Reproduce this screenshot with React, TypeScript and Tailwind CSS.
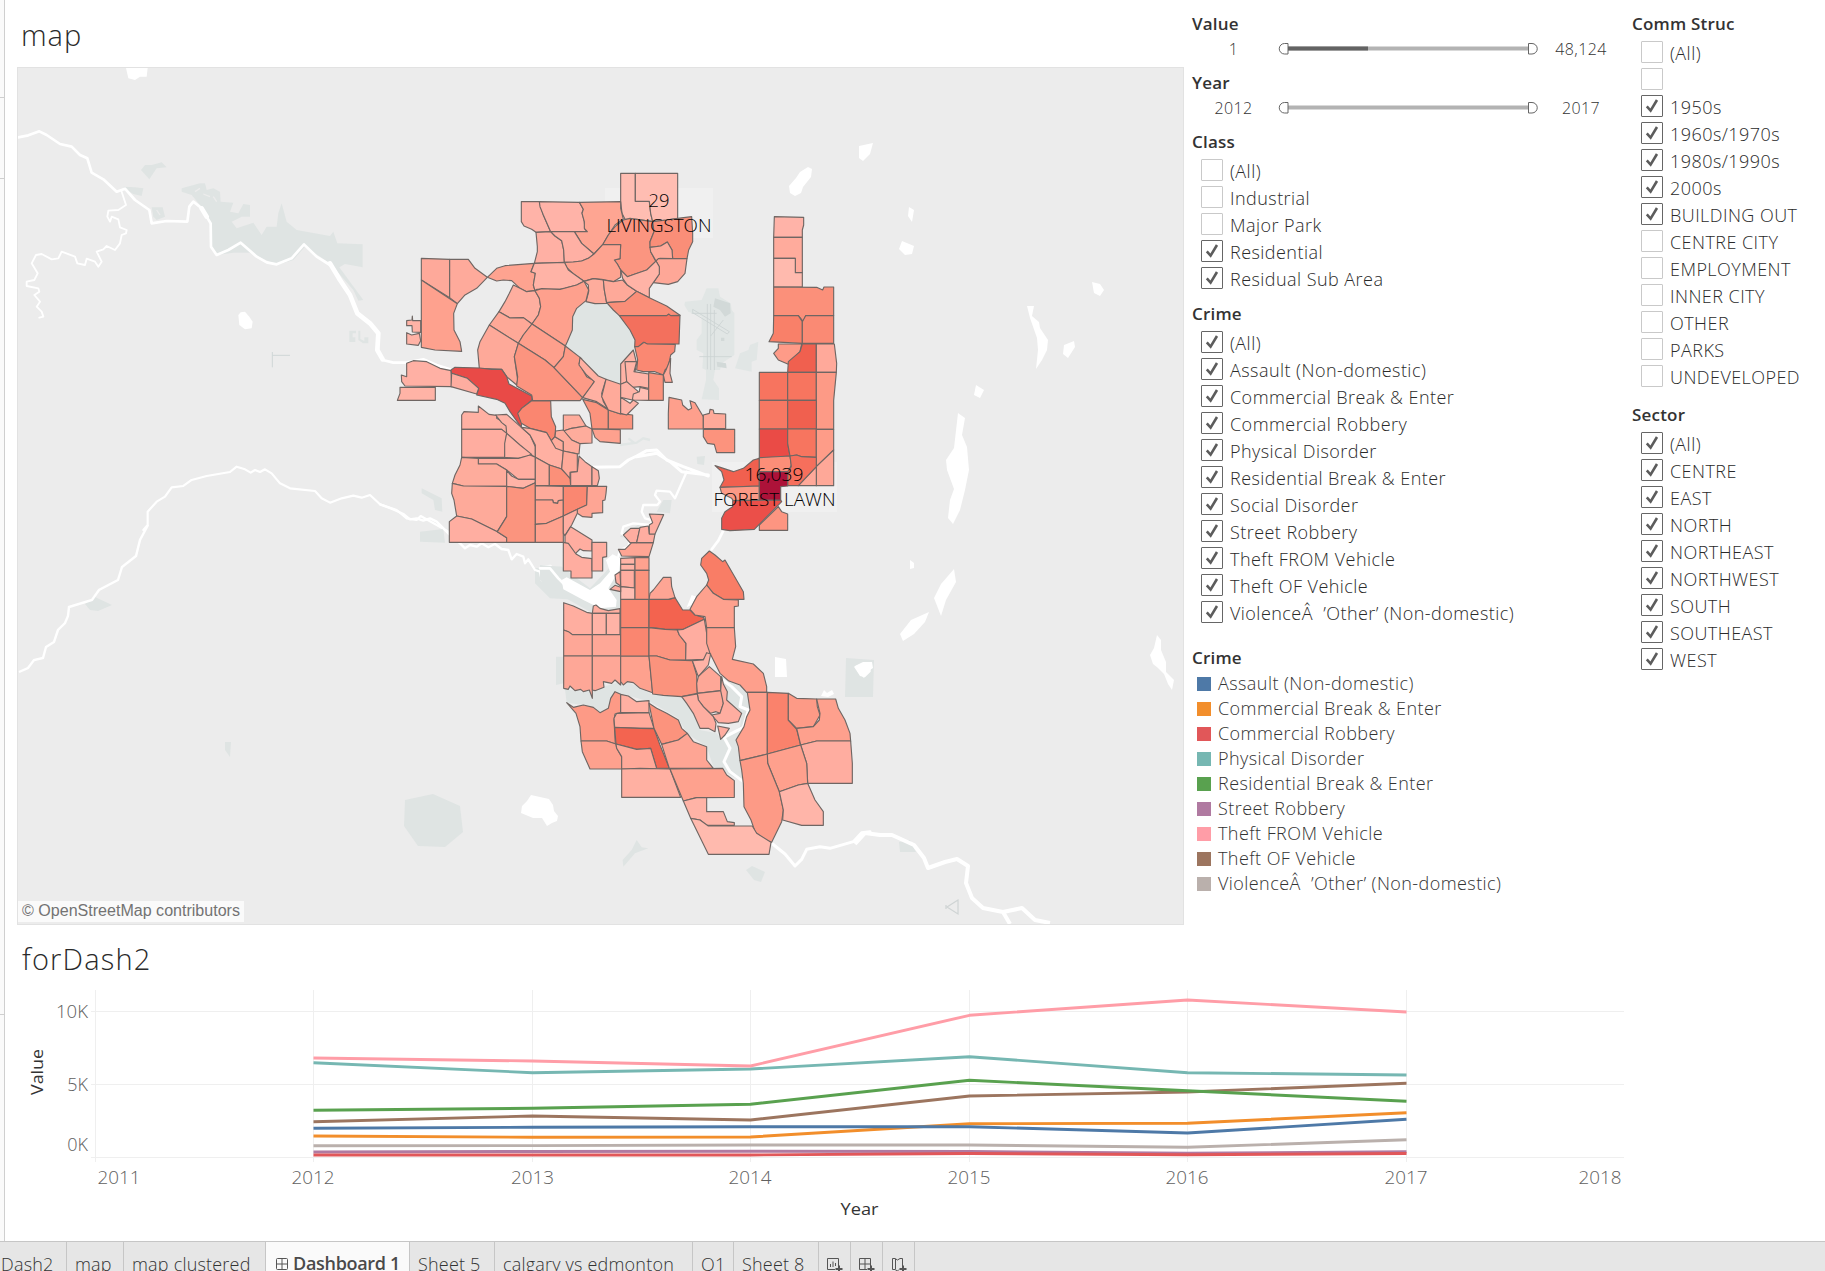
import React from "react";

type Region = [string, string];

const CLASS_ITEMS: [string, boolean][] = [
  ["(All)", false],
  ["Industrial", false],
  ["Major Park", false],
  ["Residential", true],
  ["Residual Sub Area", true],
];

const CRIME_ITEMS: [string, boolean][] = [
  ["(All)", true],
  ["Assault (Non-domestic)", true],
  ["Commercial Break & Enter", true],
  ["Commercial Robbery", true],
  ["Physical Disorder", true],
  ["Residential Break & Enter", true],
  ["Social Disorder", true],
  ["Street Robbery", true],
  ["Theft FROM Vehicle", true],
  ["Theft OF Vehicle", true],
  ["ViolenceÂ\u00a0 ’Other’ (Non-domestic)", true],
];

const STRUCTURE_ITEMS: [string, boolean][] = [
  ["(All)", false],
  ["", false],
  ["1950s", true],
  ["1960s/1970s", true],
  ["1980s/1990s", true],
  ["2000s", true],
  ["BUILDING OUT", true],
  ["CENTRE CITY", false],
  ["EMPLOYMENT", false],
  ["INNER CITY", false],
  ["OTHER", false],
  ["PARKS", false],
  ["UNDEVELOPED", false],
];

const SECTOR_ITEMS: [string, boolean][] = [
  ["(All)", true],
  ["CENTRE", true],
  ["EAST", true],
  ["NORTH", true],
  ["NORTHEAST", true],
  ["NORTHWEST", true],
  ["SOUTH", true],
  ["SOUTHEAST", true],
  ["WEST", true],
];

const LEGEND: [string, string][] = [
  ["Assault (Non-domestic)", "bg-[#4e79a7]"],
  ["Commercial Break & Enter", "bg-[#f28e2b]"],
  ["Commercial Robbery", "bg-[#e15759]"],
  ["Physical Disorder", "bg-[#76b7b2]"],
  ["Residential Break & Enter", "bg-[#59a14f]"],
  ["Street Robbery", "bg-[#b07aa1]"],
  ["Theft FROM Vehicle", "bg-[#ff9da7]"],
  ["Theft OF Vehicle", "bg-[#9c755f]"],
  ["ViolenceÂ\u00a0 ’Other’ (Non-domestic)", "bg-[#bab0ac]"],
];

const NORTH: Region[] = [
  ["#ffbdb2", "722,70 766,70 766,154 808,154 812,190 818,215 770,208 735,208 726,190 722,155"],
  ["#ffbdb2", "766,70 893,70 893,205 860,210 818,215 812,190 808,154 766,154"],
  ["#ffb3a8", "424,155 478,155 490,195 512,245 468,247 455,238 432,228 424,215"],
  ["#ffb3a8", "478,155 598,157 610,178 606,188 613,215 615,238 622,245 512,245 490,195 480,170"],
  ["#fea592", "598,157 722,155 722,175 730,207 705,225 685,255 668,284 642,312 605,280 583,245 622,245 613,235 613,215 606,190 610,178"],
  ["#ffb0a4", "468,247 512,245 525,258 545,272 551,300 553,337 463,340 472,305 472,290"],
  ["#ffb0a4", "512,245 583,245 605,280 642,312 625,325 605,333 580,336 553,337 551,300 545,272 525,258"],
  ["#fb9580", "730,210 750,205 770,208 818,215 822,245 810,275 812,305 828,335 820,348 800,360 765,372 742,380 722,360 712,342 703,330 720,326 722,284 668,284 685,255 705,230"],
  ["#fa8e78", "893,205 935,200 938,250 938,275 926,300 921,326 878,326 876,300 862,276 842,288 810,292 810,275 822,245 818,215 860,210"],
  ["#ffaa9a", "810,292 842,288 862,276 876,300 878,326 840,325 828,333 812,305"],
  ["#fea797", "835,326 921,326 915,370 893,395 865,403 820,398 838,372 838,350 828,333"],
  ["#fea390", "642,312 668,284 722,284 720,326 703,330 712,342 722,360 722,382 700,395 665,388 640,386 612,394 580,372 560,352 553,337 580,336 605,333 625,325"],
  ["#fea390", "322,382 350,355 375,347 463,340 453,365 466,370 460,405 465,422 440,425 420,415 395,392 370,390 350,393"],
  ["#ffb3a6", "463,340 553,337 565,360 590,378 612,394 590,405 555,415 540,418 470,418 465,422 460,405 466,370 453,365"],
  ["#feac9c", "612,394 640,386 670,390 673,420 680,460 645,461 618,455 626,425 625,405"],
  ["#fea999", "670,390 700,395 728,390 742,405 770,424 735,454 680,458 673,420"],
  ["#ffb3a6", "722,360 742,380 765,372 800,360 828,333 838,350 838,372 820,398 808,415 808,443 770,424 742,405 728,385"],
  ["#fa8e78", "680,458 735,454 770,424 808,443 860,468 900,496 718,497 700,480"],
  ["#f3705d", "718,497 860,497 866,492 872,497 900,496 897,582 802,582 790,577 775,590 764,590 765,570 750,540"],
  ["#fa8872", "764,590 775,590 792,577 802,582 886,583 884,605 872,615 865,650 855,660 850,675 825,665 790,665 770,660 773,630"],
  ["#fea99a", "124,325 209,328 209,443 124,390"],
  ["#feaa9b", "209,328 265,328 285,355 322,382 290,415 255,435 232,461 209,443"],
  ["#fea18e", "124,390 232,461 221,490 222,540 240,575 245,604 165,600 124,592"],
  ["#ffb3a6", "80,512 96,510 97,498 98,512 122,512 122,547 97,546 96,527 80,527"],
  ["#ffb3a6", "80,548 95,555 118,550 122,572 115,586 80,582"],
  ["#feae9f", "400,405 420,415 440,425 465,422 478,445 482,470 475,495 456,522 430,503 390,504 357,485 375,455 388,430"],
  ["#fea08d", "465,422 485,416 540,418 590,405 612,394 626,420 618,452 590,475 578,500 577,540 562,575 556,588 456,522 475,495 482,470 478,445"],
  ["#fea897", "357,485 390,504 430,503 456,522 430,555 415,580 328,525"],
  ["#fea999", "328,525 415,580 403,620 413,690 410,705 380,680 365,658 298,655 293,600 300,575"],
  ["#fe9f8c", "456,522 556,588 550,620 522,653 495,630 415,580 430,555"],
  ["#fc947f", "415,580 495,630 522,653 608,743 600,752 458,752 455,735 410,708 413,680 403,620"],
  ["#fd9a86", "556,588 605,626 597,640 605,655 620,680 643,692 635,710 608,743 522,653 550,620"],
];

const WEST: Region[] = [
  ["#ffb0a4", "80,40 100,32 140,35 180,55 213,62 215,110 75,108 65,95 64,75 80,80"],
  ["#ffb3a6", "60,112 166,112 166,151 52,151 60,130"],
  ["#e94a47", "213,60 225,52 300,54 335,58 365,58 380,80 387,102 455,138 456,150 425,175 415,190 425,215 424,232 390,185 375,160 350,148 290,135 296,115 262,85 215,70"],
  ["#feada0", "215,70 262,85 296,115 290,132 213,110"],
  ["#fa8670", "425,175 456,152 512,153 514,200 527,230 525,260 514,272 500,248 450,235 424,220 413,190"],
  ["#ffb0a2", "245,195 252,185 295,187 295,168 327,193 350,196 350,205 363,212 380,228 380,250 365,238 245,238"],
  ["#ffada0", "245,238 365,238 380,250 374,322 245,322"],
  ["#ffb3a6", "347,195 380,193 424,232 450,255 466,290 466,322 450,313 380,250 378,228 365,218"],
  ["#ffb3a6", "380,250 420,285 455,313 440,320 415,325 374,322 374,280"],
  ["#ffb0a2", "424,232 450,235 500,248 514,272 527,290 550,303 545,357 508,345 466,322 466,285 450,255"],
  ["#ffada0", "295,325 415,325 450,315 466,322 466,388 415,388 380,360 350,342 295,342"],
  ["#feac9c", "245,322 295,325 295,342 350,342 380,360 380,409 250,408 217,400 225,375 240,345"],
  ["#ffb3a6", "380,362 395,378 415,388 466,388 466,398 430,415 380,409"],
  ["#feaa9a", "217,400 250,408 380,409 380,500 352,545 275,507 230,498 222,450 215,430"],
  ["#ffaea1", "208,515 230,498 275,507 352,545 380,563 380,577 208,577"],
  ["#fb947e", "380,409 430,415 466,398 466,577 380,577 380,563 352,545 380,500"],
  ["#feaa9a", "466,322 508,345 508,407 466,407"],
  ["#fb9079", "508,345 545,357 570,383 572,407 508,407"],
  ["#feaa9a", "466,407 550,409 550,450 535,452 533,460 520,458 518,450 466,450"],
  ["#fea18e", "466,450 518,450 520,458 533,460 535,452 550,450 550,498 500,520 466,523"],
  ["#fea18e", "466,523 500,520 550,498 550,577 466,577"],
  ["#fa8771", "550,409 622,409 620,465 550,498"],
  ["#fea594", "622,409 680,409 678,430 675,450 668,452 668,488 636,490 636,502 608,500 592,490 592,478 620,465"],
  ["#ffada0", "550,498 592,478 592,490 575,525 555,557 550,550"],
  ["#ffada0", "555,557 572,530 636,570 636,603 610,602 600,597 587,610 590,618 555,577"],
  ["#ffada0", "550,577 565,580 588,612 605,622 636,626 636,684 573,684 573,663 550,663"],
  ["#ffaea1", "636,577 680,577 680,620 668,622 668,663 636,663"],
  ["#feac9c", "550,195 598,195 618,228 575,235 550,243"],
  ["#feac9c", "550,243 575,235 618,228 636,237 636,279 600,281 575,270"],
  ["#feac9c", "514,272 525,260 550,275 550,303 527,295"],
  ["#feac9c", "527,243 550,240 575,270 600,281 597,312 550,303 550,275 525,260"],
  ["#fea999", "550,303 592,312 592,365 570,367 570,385 545,357"],
  ["#feada0", "597,318 615,335 636,350 636,407 572,407 572,367 592,365"],
  ["#feada0", "636,350 655,362 658,385 652,407 636,407"],
  ["#fb937d", "608,148 650,158 685,180 685,237 636,237 630,190"],
  ["#fb937d", "685,180 715,190 758,195 758,237 685,237"],
  ["#fea18e", "636,237 721,239 721,280 660,275 645,262"],
  ["#ffb0a2", "600,22 655,78 678,88 665,130 670,155 685,178 650,155 608,143 643,95 620,75 597,45"],
  ["#ffaa9a", "678,88 722,103 722,192 685,180 665,140"],
  ["#ffb3a6", "722,42 760,0 770,40 765,65 740,95 722,103"],
  ["#ffb3a6", "735,35 770,35 762,65 806,72 806,115 780,110 757,112 740,95"],
  ["#ffb3a6", "722,103 740,95 760,112 775,125 757,150 722,142"],
  ["#ffbdb2", "757,150 760,132 778,125 780,112 806,118 806,151"],
  ["#ffb3a6", "722,142 750,160 760,150 775,160 740,195 722,190"],
  ["#fc937d", "806,68 850,75 850,151 806,151"],
  ["#ffa797", "850,75 858,60 872,25 870,70 877,97 855,97"],
  ["#fe9f8c", "867,142 905,150 908,165 925,180 935,175 930,152 945,158 970,200 970,237 865,237 865,190"],
];

const EAST: Region[] = [
  ["#fea999", "250,795 268,790 270,778 280,780 282,790 317,792 317,836 250,836"],
  ["#fc937d", "250,838 344,838 344,908 290,908 283,883 262,880 250,860"],
  ["#ffb3a8", "463,200 551,202 551,225 547,240 547,262 461,262"],
  ["#ffab9c", "461,262 547,262 547,368 526,368 526,325 461,325"],
  ["#ffbaae", "461,325 526,325 526,368 547,368 547,411 461,411"],
  ["#fb907a", "461,411 590,412 608,420 612,411 641,411 641,497 557,497 550,515 535,497 461,497"],
  ["#f98069", "461,497 535,497 547,515 547,580 447,575 460,550"],
  ["#fa8a74", "547,515 557,497 641,497 641,580 547,580"],
  ["#fe9b88", "475,582 545,582 540,605 505,643 475,630 461,610 475,595"],
  ["#f0604f", "547,582 589,582 589,667 503,667 505,635 540,605"],
  ["#ffa99a", "589,582 643,582 650,640 649,667 589,667"],
  ["#f7745f", "418,667 503,667 503,751 418,751"],
  ["#f7755f", "503,667 589,667 589,751 503,751"],
  ["#fd9a86", "589,667 649,667 641,751 641,838 589,838"],
  ["#f77863", "418,751 503,751 503,837 418,837"],
  ["#f0604f", "503,751 589,751 589,837 503,837"],
  ["#ea4b46", "418,837 503,837 503,880 510,918 418,925"],
  ["#f7755f", "503,837 589,837 589,922 545,920 530,915 510,918 503,880"],
  ["#fe9c88", "589,838 641,838 641,900 589,950"],
  ["#fea898", "589,950 641,900 641,1007 589,1007"],
  ["#ffa99a", "535,1007 589,950 589,1007"],
  ["#f1604f", "285,947 340,965 370,955 400,930 418,925 418,1008 300,1012 312,990 305,965"],
  ["#fc8e78", "418,923 510,918 514,945 505,965 418,965"],
  ["#f66f5c", "514,950 510,918 530,915 545,920 589,922 589,950 535,1007 503,1007 503,965"],
  ["#fc9a86", "300,1012 418,1008 418,1050 340,1052 335,1045 305,1030"],
  ["#eb4f49", "338,1052 482,1050 485,1055 403,1138 330,1142 305,1138 305,1105 315,1085 338,1070"],
  ["#ad1239", "418,965 503,965 503,1008 482,1010 482,1050 418,1050"],
  ["#fd9581", "418,1125 475,1070 485,1085 503,1092 503,1141 418,1141"],
];

const SOUTH: Region[] = [
  ["#ffaea0", "71,308 100,318 140,337 157,340 157,404 97,404 85,395 71,390"],
  ["#ffaea0", "157,340 160,318 168,315 180,325 205,332 240,326 240,340"],
  ["#ffb3a6", "157,340 199,340 199,404 157,404"],
  ["#ffb3a6", "199,340 240,340 240,404 199,404"],
  ["#fea797", "71,390 85,395 97,404 157,404 157,468 71,468"],
  ["#fea797", "157,404 242,404 242,468 157,468"],
  ["#fea797", "71,468 157,468 157,595 148,570 130,575 122,568 105,572 90,558 85,568 71,565"],
  ["#fea797", "157,468 242,468 242,555 225,540 215,550 190,545 192,562 165,572 157,570"],
  ["#fea18e", "242,468 327,468 338,578 300,565 280,548 262,545 250,555 242,545"],
  ["#fa8670", "242,298 327,298 327,383 242,383"],
  ["#fa8670", "242,383 327,383 327,468 242,468"],
  ["#f3634f", "327,298 385,298 405,293 428,330 450,330 465,345 490,352 493,358 430,388 375,388 350,384 327,383"],
  ["#fc947f", "327,383 375,388 412,390 418,405 438,430 437,480 390,480 350,468 327,468"],
  ["#ffada0", "412,390 430,388 493,358 500,400 510,460 490,478 437,480 438,430 418,405"],
  ["#fb937d", "327,468 350,468 390,480 457,482 470,525 472,580 425,590 370,586 338,582"],
  ["#fea594", "330,280 340,270 370,232 393,232 395,260 405,293 385,298 327,298"],
  ["#ffb3a6", "242,175 285,173 285,193 242,193"],
  ["#ffb3a6", "242,193 285,193 285,211 242,211"],
  ["#ffada0", "242,211 283,211 283,264 242,260"],
  ["#ffbdb2", "242,260 285,264 285,298 242,298"],
  ["#fea28f", "285,173 327,173 327,211 285,211"],
  ["#fc937d", "285,211 327,211 327,298 285,298"],
  ["#fea594", "235,148 255,148 275,128 340,128 327,170 245,168"],
  ["#feada0", "250,105 272,85 300,85 290,128 270,128"],
  ["#feada0", "300,82 325,78 328,102 345,102 340,128 290,128"],
  ["#feada0", "328,42 371,44 345,102 328,102 328,75 338,68"],
  ["#feada0", "225,225 240,215 242,258 228,248"],
  ["#feada0", "210,268 225,256 242,262 242,275"],
  ["#f97d66", "508,153 525,165 548,185 555,180 610,275 612,298 550,298 520,280 500,255 506,240 500,220 482,195 485,175"],
  ["#fea18e", "500,255 520,280 550,298 595,300 595,318 583,320 583,383 500,383 495,350 465,345 450,328 470,290"],
  ["#fe9f8c", "500,383 583,383 587,440 577,478 640,492 670,520 680,560 680,577 620,577 600,555 565,542 540,520 510,460 500,430"],
  ["#ffb3a6", "457,482 490,480 500,458 512,462 505,495 475,530"],
  ["#fea797", "475,530 485,520 508,500 542,530 542,572 472,580 470,550"],
  ["#fea797", "472,580 545,572 550,610 540,640 528,635 512,640 490,620 475,600"],
  ["#feada0", "545,530 550,552 562,575 560,600 605,640 595,665 565,670 535,668 515,645 540,640 550,610 542,572"],
  ["#feada0", "425,590 472,582 475,600 490,620 520,650 528,670 525,695 505,685 480,685 460,640 440,610"],
  ["#feada0", "533,678 568,685 555,705 542,718"],
  ["#fea08d", "622,577 682,577 682,762 600,782 595,740 588,720 612,680 620,650 630,630"],
  ["#fa826c", "682,577 745,580 745,660 770,688 782,735 682,762"],
  ["#fd9a86", "745,580 770,595 830,597 832,620 840,645 820,680 770,685 745,660"],
  ["#fea08d", "830,597 887,597 895,625 915,660 930,700 932,723 830,723 782,735 770,685 820,680 838,660 840,640"],
  ["#ffada0", "782,735 830,723 932,723 937,790 937,850 803,850 800,790"],
  ["#fea08d", "682,762 782,735 800,790 803,850 775,855 718,875 683,790"],
  ["#fd9a86", "600,782 682,762 683,790 718,875 730,930 725,965 695,1027 675,1020 645,995 633,960 612,920 610,850 605,810"],
  ["#ffb5a9", "718,875 775,855 803,850 825,900 850,935 850,976 785,976 728,960 730,930"],
  ["#fd9a86", "80,608 100,622 130,615 160,622 180,638 205,625 212,595 225,575 242,583 242,638 225,642 222,660 226,732 200,723 123,723 120,680 108,640"],
  ["#fea18e", "123,723 200,723 228,732 230,745 245,770 245,807 150,807 127,755"],
  ["#ffb0a2", "242,583 265,588 290,605 327,602 327,638 242,638"],
  ["#ffaa9b", "222,655 230,640 327,638 342,685 300,685 224,682"],
  ["#f36450", "224,682 300,685 342,686 360,735 388,805 350,805 332,745 290,748 228,732"],
  ["#ffa999", "228,732 290,748 332,745 350,805 245,807 245,770 230,745"],
  ["#fc937d", "327,610 350,625 380,640 415,660 425,685 442,700 415,720 365,733 342,685"],
  ["#fea594", "365,733 415,720 442,700 460,725 500,740 500,780 520,805 388,805"],
  ["#ffb0a2", "245,807 300,805 390,807 422,892 245,892"],
  ["#fea18e", "390,807 548,805 560,825 583,842 583,892 470,893 430,903"],
  ["#ffb3a6", "430,903 470,893 500,893 500,935 550,935 562,965 583,968 583,976 500,976 480,960 452,955"],
  ["#ffbaae", "452,955 480,960 505,978 637,978 650,1000 693,1027 687,1063 505,1063"],
];

const LAKES = [
  "789,186 796,178 800,172 808,167 812,169 811,177 803,187 801,193 795,196 790,193",
  "859,146 873,143 870,154 863,161 859,158",
  "909,207 914,210 912,222 908,216",
  "902,241 914,246 912,254 905,255 899,249",
  "1092,282 1100,284 1104,290 1100,296 1094,293",
  "1027,306 1034,306 1032,316 1039,322 1040,328 1048,340 1047,350 1042,360 1036,369 1038,350 1037,338 1030,318",
  "1064,345 1074,341 1075,347 1068,358 1063,354",
  "976,385 984,390 980,398 974,395",
  "958,413 965,418 962,435 967,447 969,470 965,490 960,510 953,524 948,518 950,500 954,489 947,470 946,460 954,448",
  "954,569 956,582 946,600 941,616 934,598 941,584",
  "929,612 925,622 914,634 903,641 900,634 911,620",
  "1157,635 1161,640 1161,650 1166,662 1166,672 1174,680 1172,690 1168,684 1164,674 1158,668 1153,664 1150,655 1154,648",
  "775,657 786,659 787,677 775,677",
  "855,666 863,662 872,662 873,668 867,672 864,678 858,672",
  "522,806 527,801 531,795 549,799 553,805 554,811 558,816 557,821 552,823 547,826 542,818 533,818 521,813",
  "910,560 914,563 914,568 910,569",
  "824,690 827,693 832,690 834,694 828,697 821,696",
];

const PARKS = [
  "405,800 433,794 460,806 463,832 445,847 418,846 404,826",
  "846,658 874,660 873,697 845,697",
  "899,842 910,840 916,852 900,852",
  "225,742 231,742 230,757 225,750",
  "85,604 95,597 112,605 98,611 90,610",
  "746,870 752,866 765,872 761,882 754,880",
];

const YEARS: [string, number][] = [
  ["2011", 119],
  ["2012", 313],
  ["2013", 532.5],
  ["2014", 750],
  ["2015", 969],
  ["2016", 1187],
  ["2017", 1406],
  ["2018", 1600],
];

const GRID_X = [95.5, 313.5, 532.5, 750.5, 969.5, 1187.5, 1406.5];
const LINE_X = [313.5, 532.5, 750.5, 969.5, 1187.5, 1406.5];

const SERIES: [string, number[]][] = [
  ["#b07aa1", [1152, 1151.5, 1151.3, 1151.5, 1153.3, 1151.7]],
  ["#bab0ac", [1145.7, 1145.6, 1145, 1145, 1147.3, 1139.7]],
  ["#e15759", [1155, 1155, 1155, 1153.5, 1154.7, 1153.5]],
  ["#f28e2b", [1136, 1137.3, 1137, 1123.7, 1123.3, 1112.7]],
  ["#4e79a7", [1128.3, 1127.3, 1126.7, 1126.7, 1133, 1119.3]],
  ["#9c755f", [1121.7, 1116, 1120, 1096, 1092, 1083.3]],
  ["#59a14f", [1110.3, 1108.3, 1104.3, 1080.3, 1090.7, 1101.3]],
  ["#76b7b2", [1062.7, 1072.7, 1069, 1056.7, 1072.7, 1075]],
  ["#ff9da7", [1058, 1061, 1066, 1015.3, 1000, 1012]],
];

function Regions({ items, transform }: { items: Region[]; transform: string }) {
  return (
    <g transform={transform} stroke="#6f6663" strokeWidth={3.4} strokeLinejoin="round">
      {items.map(([fill, points], i) => (
        <polygon key={i} fill={fill} points={points} />
      ))}
    </g>
  );
}

function MapView() {
  return (
    <svg viewBox="18 68 1165 856" className="h-[858px] w-[1167px] shrink-0 border border-[#e2e2e2] bg-[#ececec]">
      <g fill="#dfe4e3">
        {PARKS.map((p) => (
          <polygon key={p} points={p} />
        ))}
      </g>
      <g transform="translate(0 50) scale(.33333)">
        <g fill="#dfe4e3">
          <polygon points="600,465 575,435 545,425 545,415 600,400 615,400 620,420 640,415 660,425 662,455 700,458 690,485 715,490 730,462 750,465 750,500 725,500 695,515 710,535 760,518 785,555 800,530 830,530 835,490 845,460 860,515 890,540 990,558 1000,545 1012,580 1088,583 1088,652 1035,642 1018,652 1090,750 1075,752 1060,720 990,640 915,590 880,630 830,645 750,608 700,608 650,615 635,590 630,520" />
          <polygon points="423,360 435,345 455,345 485,337 500,352 470,355 448,388" />
          <polygon points="370,410 405,412 430,415 425,438 400,432 380,420" />
          <polygon points="455,472 488,472 495,500 470,510 460,500" />
          <path d="M1048 842h20v8h-10v12h8v14h-18zM1075 842h6v25l12 6v-11h12v18h-16l-14-10z" />
        </g>
        <g fill="none" stroke="#ececec" strokeWidth={4}>
          <path d="M585 425 600 415M610 432 630 440M640 440 650 455M470 480 480 495" />
        </g>
        <g fill="none" stroke="#ffffff" strokeLinejoin="round" strokeLinecap="round">
          <path strokeWidth={8} d="M54 262 85 256 118 244 140 255 180 282 215 290 240 315 262 325 275 368 310 388 350 425 375 416 405 450 448 480 455 520 500 513 562 515 568 470 580 455 605 475 632 520 633 590 650 615 685 600 722 578 770 620 800 637 830 643 875 625 912 583 950 620 990 645" />
          <path strokeWidth={14} d="M605 475 620 500M990 640 1020 690 1050 735 1072 790 1110 820 1135 850 1132 900 1148 928" />
          <path strokeWidth={8} d="M1148 930 1180 938 1220 938 1270 928 1310 945 1350 958" />
          <path strokeWidth={5.5} d="M365 425 378 465 355 480 325 482 322 500 330 515 335 500 355 508 360 532 380 540 378 550 365 555 360 580 345 600 320 588 310 598 290 605 305 635 295 650 285 635 260 626 255 645 232 640 225 620 185 605 175 625 155 628 125 612 108 615 95 640 113 670 103 690 80 695 80 708 115 715 118 725 103 735 120 755 110 770 125 785 130 800 118 803" />
          <path strokeWidth={6.5} d="M430 1440 443 1425 443 1385 470 1355 495 1340 515 1312 550 1308 575 1290 620 1278 690 1266 710 1250 735 1258 752 1268 765 1260 780 1266 795 1258 815 1270 840 1300 870 1315 945 1323 965 1345 990 1358 1025 1345 1060 1337 1085 1343 1110 1335 1140 1363 1190 1380 1220 1405 1250 1410 1262 1398 1310 1425 1345 1445" />
        </g>
        <path fill="#ffffff" d="M378 54 443 54 440 80 420 80 405 90 385 85ZM715 795 722 787 735 785 748 800 758 815 755 835 735 838 718 825Z" />
        <path stroke="#cfd6d6" strokeWidth={3} fill="none" d="M870 916H817M817 906V952" />
      </g>
      <path fill="none" stroke="#ffffff" strokeWidth={2.4} d="M148 525 140 540 136 556 122 567 118 580 99 590 92 600 69 607 68 616 65 623 58 630 54 642 46 647 43 658 34 660 28 668 19 672" />
      <g fill="#ffffff">
        {LAKES.map((p) => (
          <polygon key={p} points={p} />
        ))}
      </g>
      <g transform="translate(380 150) scale(.33333)" fill="#dfe4e3">
        <polygon points="618,455 680,460 700,480 718,497 750,540 765,570 762,600 722,640 722,703 655,678 595,622 556,588 577,540 578,500 590,475" />
      </g>
      <g transform="translate(620 150) scale(.33333)">
        <path fill="#e1e6e5" d="M260 415 295 415 300 440 332 460 335 480 343 490 343 615 305 640 300 660 285 660 280 690 297 715 297 750 245 748 258 690 258 660 247 655 250 610 230 600 230 570 245 550 245 500 205 485 193 465 195 455 245 450ZM360 610 385 600 390 585 415 575 410 630 395 635 395 665 345 655Z" />
        <path fill="#d2d9d8" d="M285 445 330 460 332 490 315 500 300 480 280 470ZM290 635 318 640 320 655 292 650ZM303 563h10v10h-10z" />
        <path stroke="#cbd3d2" strokeWidth={2.5} fill="none" d="M262 462V658M272 462V660M283 480V660M218 478 328 545 322 552 218 488ZM215 490H290M272 558 310 510M238 620H335" />
      </g>
      <g transform="translate(380 350) scale(.33333)">
        <path fill="#dfe4e3" d="M125 415 185 445 187 485 165 480 160 450 125 430ZM120 545 190 537 195 578 120 575ZM465 655 545 650 545 720 600 750 510 745 465 700ZM850 450 875 450 870 490 830 485ZM765 530 780 520 770 570 720 560 740 540ZM950 320 975 318 972 345 952 342Z" />
        <path fill="none" stroke="#e1e6e5" strokeWidth={7} d="M720 285 770 278 790 265 810 270M745 265 765 280" />
        <g fill="none" stroke="#ffffff" strokeLinejoin="round" strokeLinecap="round">
          <path strokeWidth={7} d="M0 463 40 478 70 492 90 508 110 505 130 512 150 505 170 515 185 530 200 545 215 560 240 580 255 595 270 585 290 590 305 580 325 592 345 582 365 597 385 600 395 628 410 612 430 620 435 640 445 628 465 660 480 665 485 690 492 680 485 650 512 648 525 660 525 680 545 685" />
          <path strokeWidth={9} d="M600 322 632 352 720 350 745 330 770 318 800 302 830 300 860 330 910 350 985 378M770 320 830 310 870 335 905 365 985 375" />
          <path strokeWidth={7} d="M920 365 885 445 870 425 830 422 825 435 840 455 832 465 790 465 785 485 795 505 815 510 812 525 760 520 730 530 725 550 750 570 745 590 720 600 715 620" />
        </g>
      </g>
      <g transform="translate(540 500) scale(.33333)">
        <path fill="#dfe4e3" d="M0 195 65 200 150 265 240 170 240 330 155 338 70 290 0 240ZM48 470 71 470 71 550 48 555ZM75 568 130 575 157 570 240 545 262 545 340 585 425 590 460 640 480 690 530 700 545 720 600 680 605 640 560 600 545 530 600 555 622 577 630 630 588 720 605 810 610 845 560 820 520 800 500 740 440 700 415 655 330 605 240 580 212 600 205 625 180 638 130 615 80 608ZM248 1080 275 1050 290 1020 305 1042 325 1045 285 1060 250 1100Z" />
        <path fill="#ffffff" d="M65 240 80 232 150 270 180 250 210 215 198 180 218 163 242 175 238 210 205 265 230 300 228 320 180 325 130 300 70 268ZM440 322 455 285 468 290 455 315ZM942 500 965 490 992 492 992 515 975 532 960 528Z" />
        <g fill="none" stroke="#ffffff" strokeLinejoin="round" strokeLinecap="round">
          <path strokeWidth={8} d="M0 205 30 205 55 235 75 255M550 92 535 122 515 148" />
          <path strokeWidth={9} d="M548 540 575 560 605 590 600 620 625 630 610 682 552 712 570 745 552 785 570 815 610 845" />
          <path strokeWidth={9} d="M698 1032 735 1062 765 1098 785 1078 800 1048 840 1040 870 1045 940 1025 965 998 990 995" />
        </g>
      </g>
      <path fill="none" stroke="#ffffff" strokeWidth={4} strokeLinejoin="round" d="M855 844 865 833 880 835 892 835 914 845 924 858 928 868 945 862 957 859 968 866 966 883 972 898 983 908 1003 912 1010 924M1003 912 1022 908 1035 920 1050 923" />
      <path fill="none" stroke="#cfd4d4" strokeWidth={1.2} d="M958 900 947 907 958 914ZM946 905v4" />

      <g fill="#ffffff" fillOpacity={0.22}>
        <rect x="605" y="188" width="108" height="50" />
        <rect x="712" y="462" width="125" height="50" />
      </g>

      <Regions items={NORTH} transform="translate(380 150) scale(.33333)" />
      <Regions items={SOUTH} transform="translate(540 500) scale(.33333)" />
      <Regions items={WEST} transform="translate(380 350) scale(.33333)" />
      <Regions items={EAST} transform="translate(620 150) scale(.33333)" />

      <g fill="#000000" fontSize="18" fontWeight="300" textAnchor="middle">
        <text x="659" y="206.5" textLength="21" lengthAdjust="spacingAndGlyphs">29</text>
        <text x="659" y="232" textLength="105" lengthAdjust="spacingAndGlyphs">LIVINGSTON</text>
        <text x="774" y="481" textLength="59" lengthAdjust="spacingAndGlyphs">16,039</text>
        <text x="774.5" y="506" textLength="122" lengthAdjust="spacingAndGlyphs">FOREST LAWN</text>
      </g>
      <rect x="18" y="901" width="226" height="21" fill="#ffffff" fillOpacity={0.75} />
      <text x="22" y="916" fontSize="16" fill="#737373" textLength="218" lengthAdjust="spacingAndGlyphs" className="font-['Liberation_Sans',sans-serif]">
        © OpenStreetMap contributors
      </text>
    </svg>
  );
}

function Heading({ children }: { children: React.ReactNode }) {
  return (
    <h2 className="h-[26px] text-[17px] leading-[28px] font-semibold tracking-[0.2px] whitespace-nowrap text-[#333]">
      {children}
    </h2>
  );
}

function CheckRow({ label, checked }: { label: string; checked: boolean }) {
  return (
    <li className="flex h-[27px] items-start gap-[7px]">
      <span
        className={
          checked
            ? "flex h-[22px] w-[22px] shrink-0 items-center justify-center rounded-[1px] border border-[#666] bg-white"
            : "h-[22px] w-[22px] shrink-0 rounded-[1px] border border-[#c9c9c9] bg-white"
        }
      >
        {checked && (
          <svg viewBox="0 0 14 14" className="h-[14px] w-[14px]" fill="none" stroke="#5c5c5c" strokeWidth="2.6">
            <path d="M1.800 7.400 5.600 11.600 12 1" />
          </svg>
        )}
      </span>
      <span className="text-[18px] leading-[25px] font-light tracking-[0.45px] whitespace-nowrap text-[#2a2a2a]">{label}</span>
    </li>
  );
}

function CheckList({ items }: { items: [string, boolean][] }) {
  return (
    <ul className="pl-[9px]">
      {items.map(([label, checked], i) => (
        <CheckRow key={i} label={label} checked={checked} />
      ))}
    </ul>
  );
}

function RangeSlider({ low, high, progress }: { low: string; high: string; progress: boolean }) {
  return (
    <div className="flex h-[33px] items-start text-[16px] leading-[27px] font-light tracking-[0.4px] text-[#333]">
      <span className="w-[83px] text-center">{low}</span>
      <svg viewBox="0 0 268 24" className="mt-px h-6 w-[268px]">
        <rect x="11" y="9.500" width="245" height="4" fill="#b3b3b3" />
        {progress && <rect x="11" y="9.500" width="82" height="4" fill="#636363" />}
        <path d="M13 6.500h-3.500a5 5 0 0 0 0 10.500H13z" fill="#fff" stroke="#666" />
        <path d="M253.500 6.500h3.500a5 5 0 0 1 0 10.500h-3.500z" fill="#fff" stroke="#666" />
      </svg>
      <span className="w-[76px] text-center">{high}</span>
    </div>
  );
}

function Filters() {
  return (
    <div className="flex w-[440px] flex-col pt-[10px]">
      <Heading>Value</Heading>
      <RangeSlider low="1" high="48,124" progress />
      <Heading>Year</Heading>
      <RangeSlider low="2012" high="2017" progress={false} />
      <Heading>Class</Heading>
      <div className="h-[146px] pt-[5px]">
        <CheckList items={CLASS_ITEMS} />
      </div>
      <Heading>Crime</Heading>
      <div className="h-[318px] pt-[5px]">
        <CheckList items={CRIME_ITEMS} />
      </div>
      <Heading>Crime</Heading>
      <ul className="pt-px pl-[5px]">
        {LEGEND.map(([label, swatch]) => (
          <li key={label} className="flex h-[25px] items-center gap-[7px]">
            <span className={`h-[14px] w-[14px] ${swatch}`} />
            <span className="text-[18px] leading-[25px] font-light tracking-[0.43px] whitespace-nowrap text-[#333]">{label}</span>
          </li>
        ))}
      </ul>
    </div>
  );
}

function LineChart() {
  return (
    <svg viewBox="5 985 1627 240" className="h-[240px] w-[1627px]">
      <g stroke="#efefef" strokeWidth="1" shapeRendering="crispEdges">
        {GRID_X.map((x) => (
          <path key={x} d={`M${x} 990V1162`} />
        ))}
        {[1011.5, 1084.5, 1157.5].map((y) => (
          <path key={y} d={`M91 ${y}H1624`} />
        ))}
      </g>
      <g fill="none" strokeWidth="2.9" strokeLinejoin="round">
        {SERIES.map(([color, ys]) => (
          <polyline key={color} stroke={color} points={ys.map((y, i) => `${LINE_X[i]},${y}`).join(" ")} />
        ))}
      </g>
      <g fill="#606060" fontSize="18" fontWeight="300">
        <text x="88" y="1018" textAnchor="end" textLength="32" lengthAdjust="spacingAndGlyphs">10K</text>
        <text x="88" y="1091" textAnchor="end">5K</text>
        <text x="88" y="1151" textAnchor="end">0K</text>
        {YEARS.map(([label, x]) => (
          <text key={label} x={x} y="1184" textAnchor="middle" textLength="43" lengthAdjust="spacingAndGlyphs">{label}</text>
        ))}
      </g>
      <g fill="#333" fontSize="17" fontWeight="500" textAnchor="middle">
        <text x="859.500" y="1215" textLength="38" lengthAdjust="spacingAndGlyphs">Year</text>
        <text x="0" y="0" transform="translate(43 1072) rotate(-90)" textLength="46" lengthAdjust="spacingAndGlyphs">Value</text>
      </g>
    </svg>
  );
}

function GridIcon() {
  return (
    <svg viewBox="0 0 12 12" className="h-3 w-3 shrink-0" fill="none" stroke="#555">
      <rect x=".5" y=".5" width="11" height="11" rx="1" />
      <path d="M6 .5v11M.5 6h11" />
    </svg>
  );
}

function Tabs() {
  const tab = "shrink-0 overflow-hidden border-r border-[#c6c6c6] whitespace-nowrap";
  return (
    <nav className="flex h-[30px] border-t border-[#c6c6c6] bg-[#e6e6e6] text-[18px] leading-[44px] font-light tracking-[0.2px] text-[#333]">
      <div className={`${tab} w-[67px] pl-px`}>Dash2</div>
      <div className={`${tab} w-[57px] pl-2`}>map</div>
      <div className={`${tab} w-[142px] pl-2`}>map clustered</div>
      <div className="flex w-[144px] shrink-0 items-start gap-[5px] overflow-hidden border-r border-[#c6c6c6] bg-[#fafafa] pl-[10px] font-semibold whitespace-nowrap text-[#4a4a4a]">
        <span className="pt-4"><GridIcon /></span>
        <span className="leading-[43px] tracking-[-0.3px]">Dashboard 1</span>
      </div>
      <div className={`${tab} w-[85px] pl-2`}>Sheet 5</div>
      <div className={`${tab} w-[198px] pl-2`}>calgary vs edmonton</div>
      <div className={`${tab} w-[41px] pl-2`}>Q1</div>
      <div className={`${tab} w-[85px] pl-2`}>Sheet 8</div>
      <div className={`${tab} w-[32px] pt-4 pl-2`}>
        <svg viewBox="0 0 17 15" className="h-[15px] w-[17px]" fill="none" stroke="#555">
          <path d="M8 11.500H.5V.5h11V8M3.500 6v3M6 3.500V9M8.500 5v3" />
          <path strokeWidth="2" d="M12 7.500v7M8.500 11h7" />
        </svg>
      </div>
      <div className={`${tab} w-[32px] pt-4 pl-2`}>
        <svg viewBox="0 0 17 15" className="h-[15px] w-[17px]" fill="none" stroke="#555">
          <path d="M8 11.500H.5V.5h11V8M6 .5v11M.5 6h11" />
          <path strokeWidth="2" d="M12 7.500v7M8.500 11h7" />
        </svg>
      </div>
      <div className={`${tab} w-[32px] pt-4 pl-2`}>
        <svg viewBox="0 0 17 15" className="h-[15px] w-[17px]" fill="none" stroke="#555">
          <path d="M8 11.500 6.500 13 4 11.500H1.500V.5H4L6.500 2 9 .5h2.500V8M4.500 1v10" />
          <path strokeWidth="2" d="M12 7.500v7M8.500 11h7" />
        </svg>
      </div>
    </nav>
  );
}

export default function App() {
  return (
    <div className="flex h-[1271px] w-[1825px] flex-col overflow-hidden bg-white font-['Open_Sans','Noto_Sans',sans-serif]">
      <div className="flex h-[1241px]">
        <div className="flex w-[5px] shrink-0 flex-col border-r border-[#cfcfcf] bg-[#fafafa]">
          <div className="h-[98px] border-b border-[#cfcfcf]" />
          <div className="h-[81px] border-b border-[#cfcfcf]" />
          <div className="h-[836px] border-b border-[#cfcfcf]" />
        </div>
        <main className="flex w-[1627px] shrink-0 flex-col">
          <div className="flex h-[925px]">
            <section className="flex w-[1187px] flex-col pl-[12px]">
              <h1 className="h-[67px] pt-[12px] pl-[4px] text-[29px] leading-[46px] font-light tracking-[1px] text-[#2a2a2a]">map</h1>
              <MapView />
            </section>
            <Filters />
          </div>
          <h1 className="h-[60px] pt-[11px] pl-[17px] text-[29px] leading-[46px] font-light tracking-[1.2px] text-[#2a2a2a]">forDash2</h1>
          <LineChart />
        </main>
        <aside className="flex flex-col pt-[10px]">
          <Heading>Comm Struc</Heading>
          <div className="h-[365px] pt-[5px]">
            <CheckList items={STRUCTURE_ITEMS} />
          </div>
          <Heading>Sector</Heading>
          <div className="pt-[5px]">
            <CheckList items={SECTOR_ITEMS} />
          </div>
        </aside>
      </div>
      <Tabs />
    </div>
  );
}
